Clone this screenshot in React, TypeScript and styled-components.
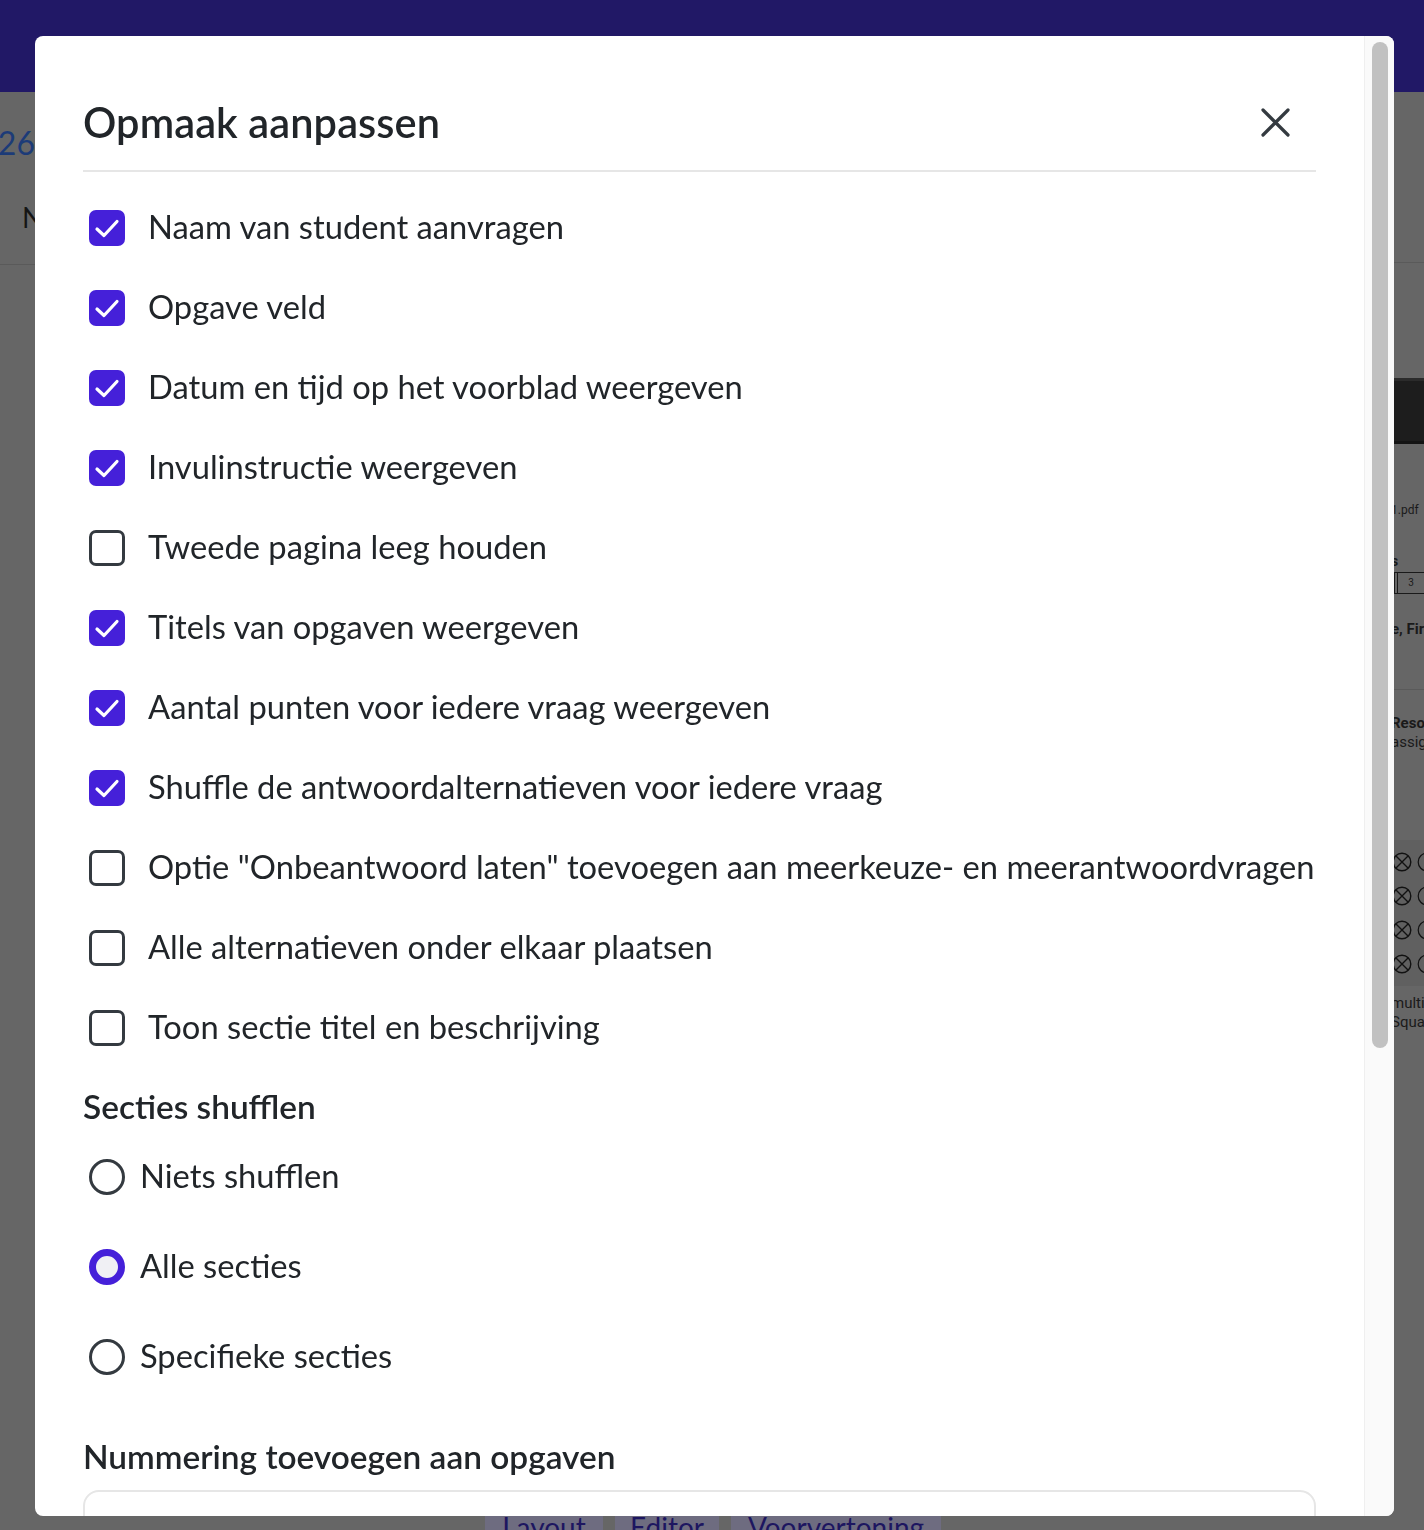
import React from "react";
import styled, { createGlobalStyle } from "styled-components";

const Global = createGlobalStyle`
  html, body { margin: 0; padding: 0; }
  body {
    width: 1424px;
    height: 1530px;
    overflow: hidden;
    background: #666666;
    font-family: Lato, "Open Sans", "Noto Sans", sans-serif;
  }
`;

/* ---------- background page ---------- */
const Page = styled.div`
  width: 1424px;
  height: 1530px;
  display: flex;
  flex-direction: column;
  background: #666666;
`;

const TopBar = styled.div`
  height: 92px;
  flex: none;
  background: #211866;
`;

const Workspace = styled.div`
  flex: 1;
  display: flex;
  min-height: 0;
`;

const LeftStrip = styled.div`
  width: 35px;
  flex: none;
  overflow: hidden;
  display: flex;
  flex-direction: column;
  align-items: flex-end;
`;

const PageNumber = styled.div`
  margin-top: 32px;
  font-size: 32px;
  line-height: 38px;
  color: #1c3b78;
  white-space: nowrap;
`;

const LeftLetter = styled.div`
  margin-top: 38px;
  width: 35px;
  font-size: 28px;
  line-height: 34px;
  color: #151515;
  padding-left: 22px;
  box-sizing: border-box;
  white-space: nowrap;
`;

const StripRule = styled.div<{ $top: number }>`
  margin-top: ${(p) => p.$top}px;
  height: 1px;
  width: 100%;
  background: #5a5a5a;
  flex: none;
`;

const Center = styled.div`
  flex: 1;
  display: flex;
  flex-direction: column;
  justify-content: flex-end;
`;

const TabBar = styled.div`
  height: 14px;
  display: flex;
  align-items: flex-start;
  padding-left: 450px;
  gap: 12px;
  overflow: hidden;
`;

const Tab = styled.div<{ $w: number }>`
  width: ${(p) => p.$w}px;
  height: 30px;
  background: #6e6c80;
  color: #1d1660;
  font-size: 28px;
  line-height: 22px;
  text-align: center;
  overflow: hidden;
  white-space: nowrap;
`;

const RightStrip = styled.div`
  width: 30px;
  flex: none;
  overflow: hidden;
  display: flex;
  flex-direction: column;
  font-family: Roboto, "Liberation Sans", sans-serif;
  color: #1a1a1a;
`;

const DarkBar = styled.div`
  margin-top: 115px;
  height: 60px;
  flex: none;
  background: #1d1d1d;
  border-top: 3px solid #2b2b2b;
  border-bottom: 3px solid #141414;
`;

const Tiny = styled.div<{ $mt: number; $bold?: boolean; $size?: number }>`
  margin-top: ${(p) => p.$mt}px;
  font-size: ${(p) => p.$size ?? 11}px;
  line-height: ${(p) => (p.$size ?? 11) + 4}px;
  font-weight: ${(p) => (p.$bold ? 700 : 400)};
  white-space: nowrap;
  margin-left: -3px;
  flex: none;
`;

const NumBox = styled.div`
  margin-top: 2px;
  height: 20px;
  flex: none;
  display: flex;
  border-top: 1px solid #1a1a1a;
  border-bottom: 1px solid #1a1a1a;
  border-left: 1px solid #1a1a1a;
  font-size: 10px;
  line-height: 20px;
`;

const NumCell = styled.div`
  width: 26px;
  margin-left: 2px;
  border-left: 1px solid #1a1a1a;
  text-align: center;
`;

const IconBlock = styled.div`
  margin-top: 88px;
  height: 146px;
  flex: none;
  background: #606060;
  display: flex;
  flex-direction: column;
  justify-content: center;
  gap: 14px;
`;

const IconRow = styled.div`
  display: flex;
  gap: 5px;
  height: 20px;
  margin-left: -2px;
  & > svg { flex: none; }
`;

const CrossCircle = () => (
  <svg width="20" height="20" viewBox="0 0 20 20" fill="none" stroke="#111" strokeWidth="1.4">
    <circle cx="10" cy="10" r="8.8" />
    <path d="M4 4 L16 16 M16 4 L4 16" />
  </svg>
);

const HalfCircle = () => (
  <svg width="20" height="20" viewBox="0 0 20 20" fill="none" stroke="#111" strokeWidth="1.2">
    <circle cx="10" cy="10" r="8.8" />
  </svg>
);

/* ---------- modal ---------- */
const Modal = styled.div`
  position: fixed;
  left: 35px;
  top: 36px;
  width: 1359px;
  height: 1480px;
  background: #ffffff;
  border-radius: 8px;
  overflow: hidden;
  display: flex;
  color: #212529;
`;

const Content = styled.div`
  flex: 1;
  padding: 0 48px 0 48px;
  display: flex;
  flex-direction: column;
  min-width: 0;
`;

const Header = styled.div`
  display: flex;
  align-items: center;
  justify-content: space-between;
  padding-top: 62px;
  padding-bottom: 24px;
  border-bottom: 2px solid #e6e6e6;
`;

const Title = styled.h2`
  margin: 0;
  font-size: 41.5px;
  line-height: 48px;
  font-weight: 600;
  letter-spacing: 0.1px;
`;

const CloseButton = styled.button`
  border: none;
  background: none;
  padding: 0;
  margin-right: 26px;
  width: 29px;
  height: 29px;
  display: flex;
  align-items: center;
  justify-content: center;
  cursor: pointer;
`;

const OptionList = styled.div`
  display: flex;
  flex-direction: column;
  gap: 36px;
  padding-top: 34px;
`;

const OptionRow = styled.label`
  display: flex;
  align-items: center;
  min-height: 44px;
  padding-left: 6px;
  gap: 23px;
  font-size: 32.7px;
  line-height: 44px;
  white-space: nowrap;
`;

const LabelText = styled.span`
  margin-top: -3px;
`;

const Box = styled.span<{ $checked: boolean }>`
  width: 36px;
  height: 36px;
  flex: none;
  box-sizing: border-box;
  border-radius: 7px;
  background: ${(p) => (p.$checked ? "#4520d9" : "#ffffff")};
  border: ${(p) => (p.$checked ? "none" : "3px solid #343a40")};
  display: flex;
  align-items: center;
  justify-content: center;
`;

const SectionHeading = styled.h3<{ $mt: number }>`
  margin: ${(p) => p.$mt}px 0 0 0;
  font-size: 33.4px;
  line-height: 44px;
  font-weight: 600;
`;

const RadioList = styled.div`
  display: flex;
  flex-direction: column;
  gap: 46px;
  padding-top: 27px;
`;

const RadioRow = styled.label`
  display: flex;
  align-items: center;
  min-height: 44px;
  padding-left: 6px;
  gap: 15px;
  font-size: 32.7px;
  line-height: 44px;
`;

const RadioDot = styled.span<{ $checked: boolean }>`
  width: 36px;
  height: 36px;
  flex: none;
  box-sizing: border-box;
  border-radius: 50%;
  background: ${(p) => (p.$checked ? "#f0f0f4" : "#ffffff")};
  border: ${(p) => (p.$checked ? "7px solid #4520d9" : "3px solid #343a40")};
`;

const SelectBox = styled.div`
  margin-top: 12px;
  height: 80px;
  border: 2px solid #e6e6e6;
  border-radius: 16px;
  flex: none;
`;

const ScrollTrack = styled.div`
  width: 30px;
  flex: none;
  background: #fafafa;
  border-left: 1px solid #efefef;
  box-sizing: border-box;
  padding: 6px 6px 0 7px;
`;

const ScrollThumb = styled.div`
  height: 1006px;
  border-radius: 8px;
  background: #c1c1c1;
`;

const checkboxes: [string, boolean][] = [
  ["Naam van student aanvragen", true],
  ["Opgave veld", true],
  ["Datum en tijd op het voorblad weergeven", true],
  ["Invulinstructie weergeven", true],
  ["Tweede pagina leeg houden", false],
  ["Titels van opgaven weergeven", true],
  ["Aantal punten voor iedere vraag weergeven", true],
  ["Shuffle de antwoordalternatieven voor iedere vraag", true],
  ['Optie "Onbeantwoord laten" toevoegen aan meerkeuze- en meerantwoordvragen', false],
  ["Alle alternatieven onder elkaar plaatsen", false],
  ["Toon sectie titel en beschrijving", false],
];

const radios: [string, boolean][] = [
  ["Niets shufflen", false],
  ["Alle secties", true],
  ["Specifieke secties", false],
];

const Check = () => (
  <svg width="36" height="36" viewBox="0 0 36 36" fill="none">
    <path d="M8 19 L15 25.5 L28 11.5" stroke="#ffffff" strokeWidth="3.2" strokeLinecap="round" strokeLinejoin="round" />
  </svg>
);

const CloseIcon = () => (
  <svg width="29" height="29" viewBox="0 0 29 29" fill="none">
    <path d="M2 2 L27 27 M27 2 L2 27" stroke="#343a40" strokeWidth="3.2" strokeLinecap="round" />
  </svg>
);

export default function App() {
  return (
    <>
      <Global />
      <Page>
        <TopBar />
        <Workspace>
          <LeftStrip>
            <PageNumber>/26</PageNumber>
            <LeftLetter>N</LeftLetter>
            <StripRule $top={30} />
          </LeftStrip>
          <Center>
            <TabBar>
              <Tab $w={118}>Layout</Tab>
              <Tab $w={104}>Editor</Tab>
              <Tab $w={210}>Voorvertoning</Tab>
            </TabBar>
          </Center>
          <RightStrip>
            <StripRule $top={170} />
            <DarkBar />
            <Tiny $mt={58} $size={12}>1.pdf</Tiny>
            <Tiny $mt={34} $bold $size={14}>s</Tiny>
            <NumBox>
              <NumCell>3</NumCell>
            </NumBox>
            <Tiny $mt={26} $bold $size={15}>e, Fir</Tiny>
            <StripRule $top={50} />
            <Tiny $mt={24} $bold $size={15}>Reso</Tiny>
            <Tiny $mt={0} $size={15}>assig</Tiny>
            <IconBlock>
              {[0, 1, 2, 3].map((i) => (
                <IconRow key={i}>
                  <CrossCircle />
                  <HalfCircle />
                </IconRow>
              ))}
            </IconBlock>
            <Tiny $mt={8} $size={15}>multi</Tiny>
            <Tiny $mt={0} $size={15}>Squa</Tiny>
          </RightStrip>
        </Workspace>
      </Page>

      <Modal>
        <Content>
          <Header>
            <Title>Opmaak aanpassen</Title>
            <CloseButton aria-label="Sluiten">
              <CloseIcon />
            </CloseButton>
          </Header>
          <OptionList>
            {checkboxes.map(([label, checked]) => (
              <OptionRow key={label}>
                <Box $checked={checked}>{checked && <Check />}</Box>
                <LabelText>{label}</LabelText>
              </OptionRow>
            ))}
          </OptionList>
          <SectionHeading $mt={34}>Secties shufflen</SectionHeading>
          <RadioList>
            {radios.map(([label, checked]) => (
              <RadioRow key={label}>
                <RadioDot $checked={checked} />
                <LabelText>{label}</LabelText>
              </RadioRow>
            ))}
          </RadioList>
          <SectionHeading $mt={55}>Nummering toevoegen aan opgaven</SectionHeading>
          <SelectBox />
        </Content>
        <ScrollTrack>
          <ScrollThumb />
        </ScrollTrack>
      </Modal>
    </>
  );
}
